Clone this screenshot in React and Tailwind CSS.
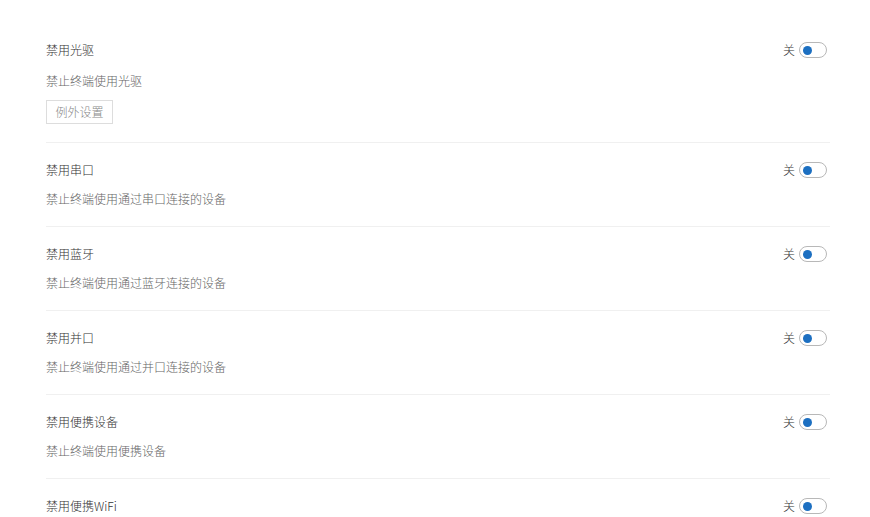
const ITEMS = [
  { title: '禁用光驱', desc: '禁止终端使用光驱', exception: true },
  { title: '禁用串口', desc: '禁止终端使用通过串口连接的设备' },
  { title: '禁用蓝牙', desc: '禁止终端使用通过蓝牙连接的设备' },
  { title: '禁用并口', desc: '禁止终端使用通过并口连接的设备' },
  { title: '禁用便携设备', desc: '禁止终端使用便携设备' },
  { title: '禁用便携WiFi', desc: '禁止终端使用便携WiFi' },
];

function Toggle() {
  return (
    <div className="flex items-center gap-[4px]">
      <span className="text-[12px] text-[#333]">关</span>
      <span className="flex h-[16px] w-[28px] items-center rounded-full border border-[#b8b8b8] bg-white pl-[3px]">
        <span className="h-[9px] w-[9px] rounded-full bg-[#1c6fc1]" />
      </span>
    </div>
  );
}

export default function App() {
  return (
    <div
      className="h-[517px] w-[870px] overflow-hidden bg-white pl-[46px] pt-[40px] font-light"
      style={{ fontFamily: '"Microsoft YaHei", "Noto Sans CJK SC", sans-serif' }}
    >
      <div className="w-[784px]">
        {ITEMS.map((item, i) => (
          <div
            key={item.title}
            className={i === 0 ? 'pb-[18px]' : 'border-t border-[#f0f0f0] pt-[17px] pb-[17px]'}
          >
            <div className="flex h-5 items-center justify-between pr-[3px]">
              <span className="text-[12px] text-[#333]">{item.title}</span>
              <Toggle />
            </div>
            <div className={`flex h-5 items-center text-[12px] text-[#666] ${i === 0 ? 'mt-[11px]' : 'mt-[9px]'}`}>
              {item.desc}
            </div>
            {item.exception && (
              <div className="mt-[9px] flex h-6 w-[67px] items-center justify-center border border-[#dddddd] text-[12px] text-[#888]">
                例外设置
              </div>
            )}
          </div>
        ))}
      </div>
    </div>
  );
}
